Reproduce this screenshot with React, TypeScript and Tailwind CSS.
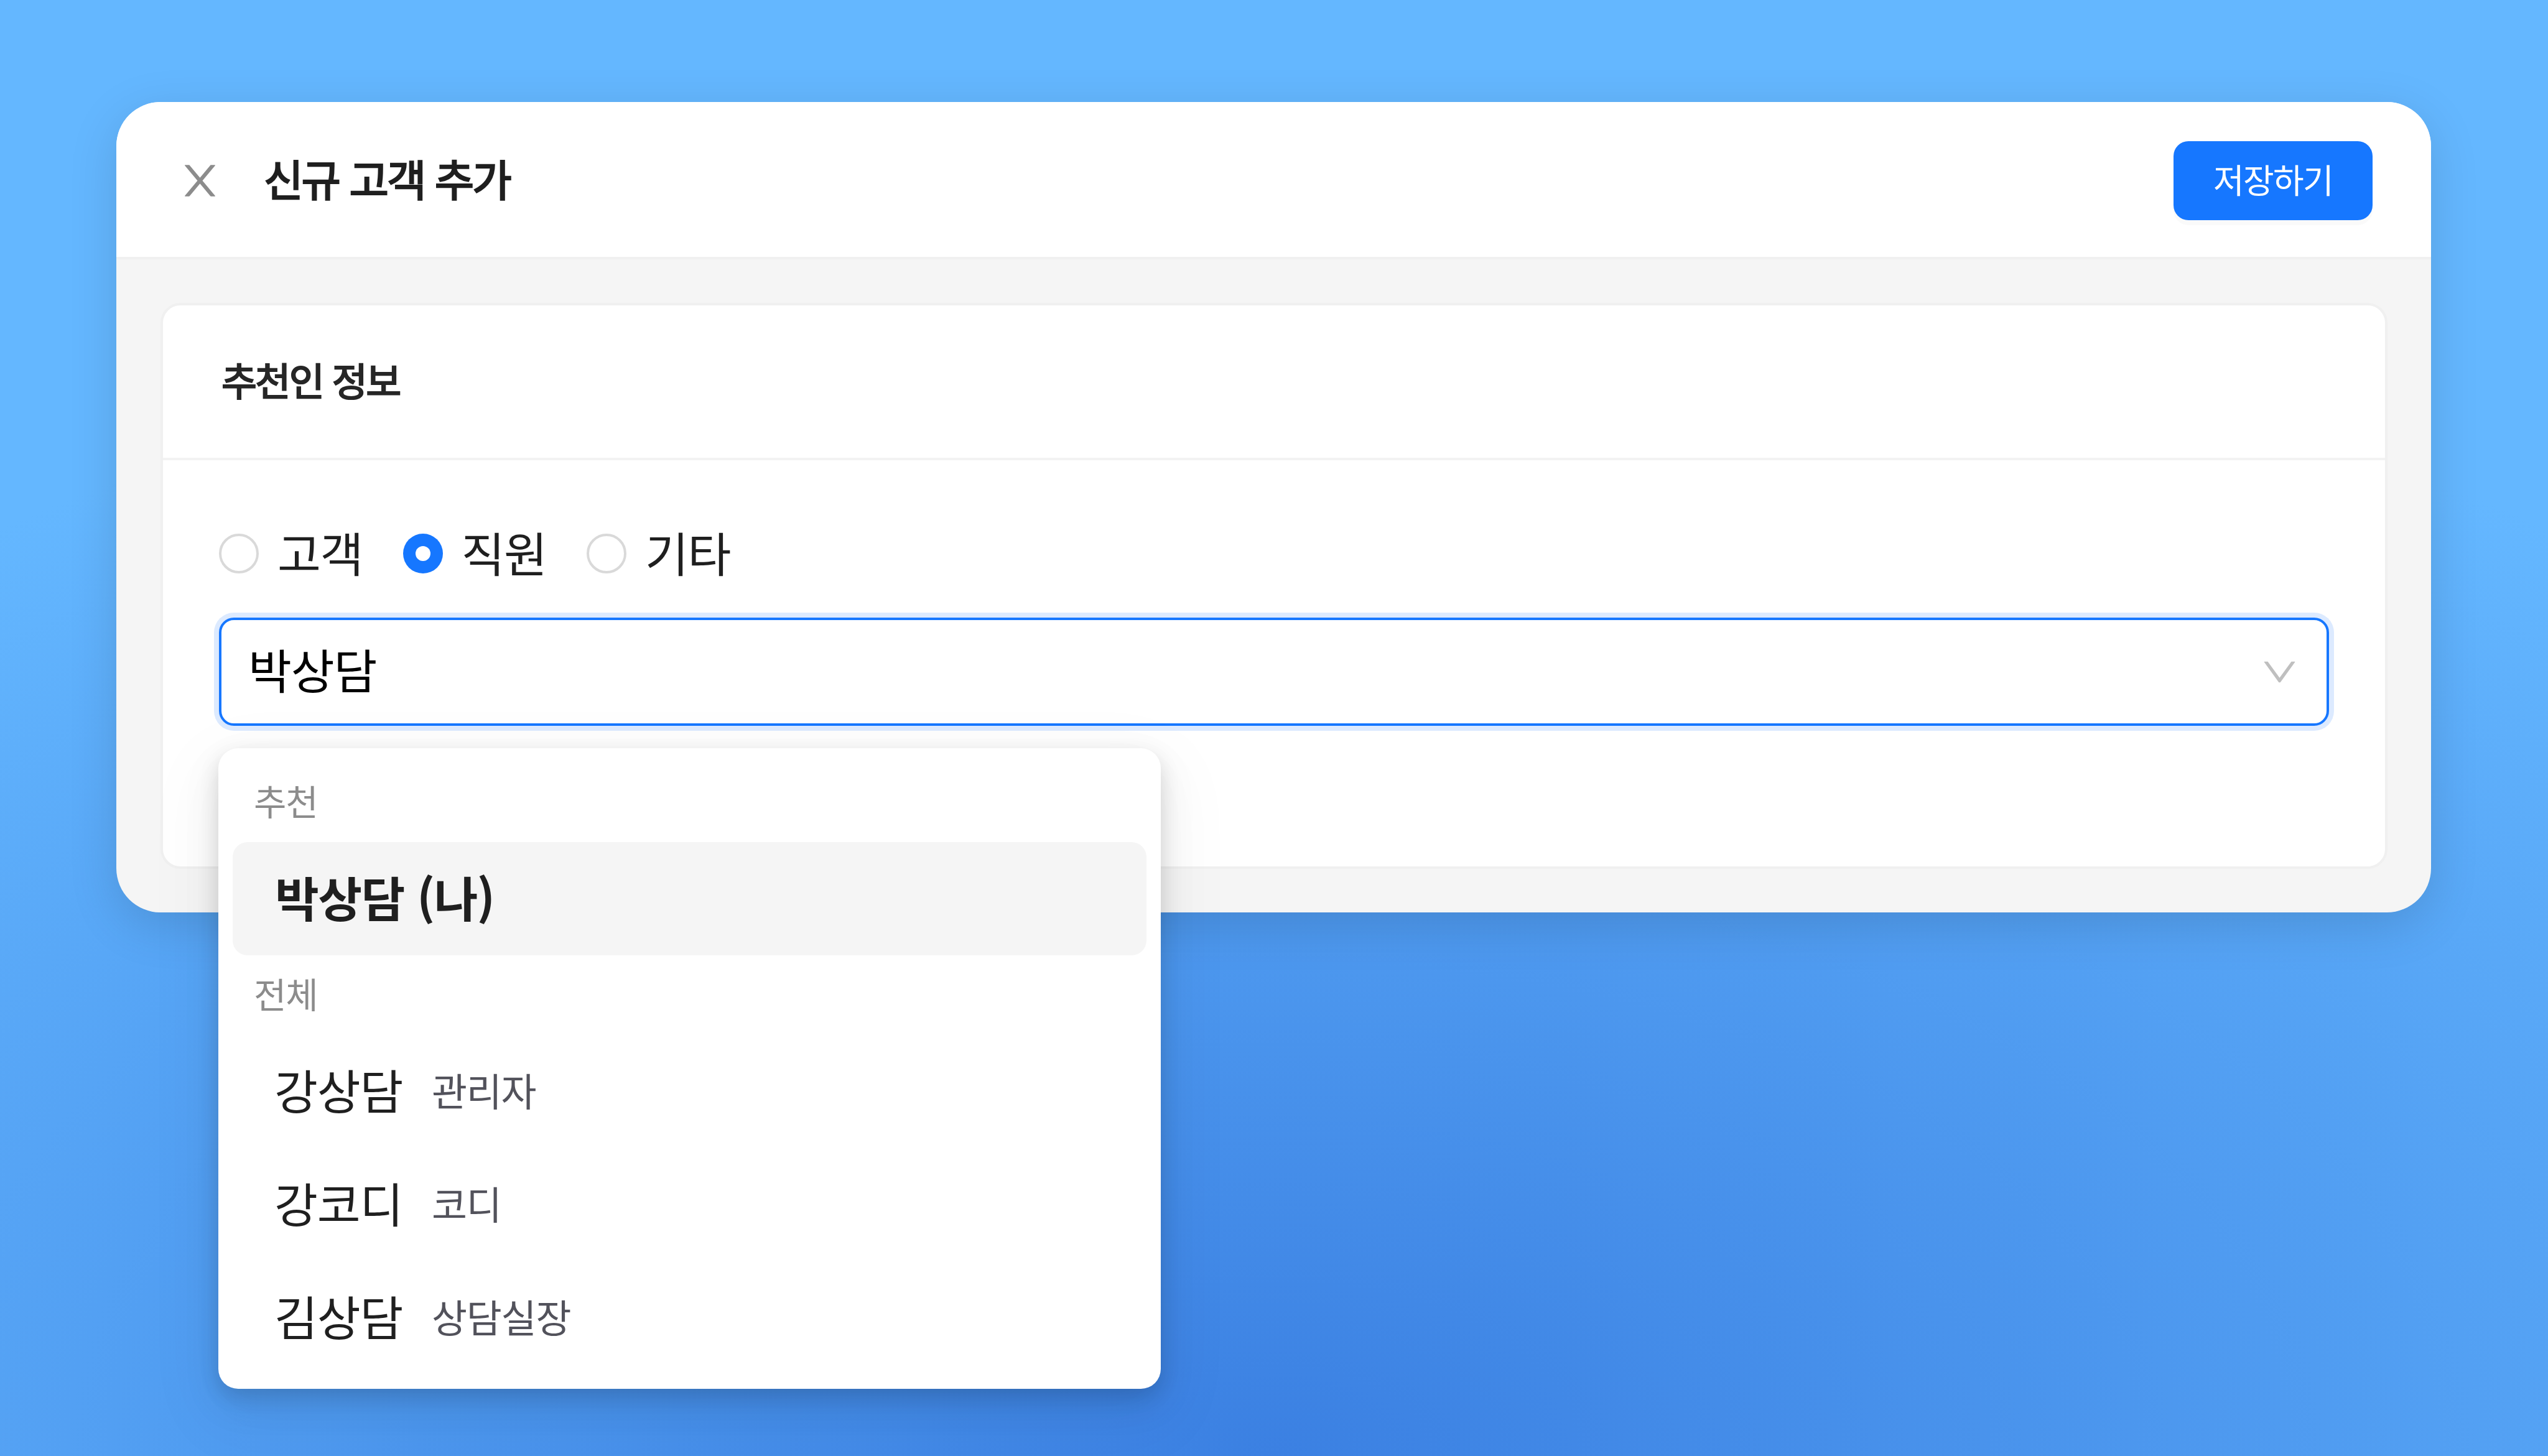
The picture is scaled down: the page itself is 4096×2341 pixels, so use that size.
import clsx from "clsx";

const radios = [
  { label: "고객", checked: false },
  { label: "직원", checked: true },
  { label: "기타", checked: false },
];

const staff = [
  { name: "강상담", role: "관리자" },
  { name: "강코디", role: "코디" },
  { name: "김상담", role: "상담실장" },
];

function CloseIcon({ className }: { className?: string }) {
  return (
    <svg viewBox="0 0 1024 1024" fill="currentColor" className={className}>
      <path d="M563.8 512l262.5-312.9c4.4-5.2.7-13.1-6.1-13.1h-79.8c-4.7 0-9.2 2.1-12.3 5.7L511.6 449.8 295.1 191.7c-3-3.6-7.5-5.7-12.3-5.7H203c-6.8 0-10.5 7.9-6.1 13.1L459.4 512 196.9 824.9A7.95 7.95 0 0 0 203 838h79.8c4.7 0 9.2-2.1 12.3-5.7l216.5-258.1 216.5 258.1c3 3.6 7.5 5.7 12.3 5.7h79.8c6.8 0 10.5-7.9 6.1-13.1L563.8 512z" />
    </svg>
  );
}

function DownIcon({ className }: { className?: string }) {
  return (
    <svg viewBox="0 0 1024 1024" fill="currentColor" className={className}>
      <path d="M884 256h-75c-5.1 0-9.9 2.5-12.9 6.6L512 654.2 227.9 262.6c-3-4.1-7.8-6.6-12.9-6.6h-75c-6.5 0-10.3 7.4-6.5 12.7l352.6 486.1c12.8 17.6 39 17.6 51.7 0l352.6-486.1c3.9-5.3.1-12.7-6.4-12.7z" />
    </svg>
  );
}

function Header() {
  return (
    <header className="flex h-[253px] items-center justify-between border-b-4 border-[#f0f0f0] bg-white pt-[4px] pr-[94px] pl-[95px]">
      <div className="flex items-center">
        <CloseIcon className="size-[79px] text-[#8c8c8c]" />
        <h1 className="ml-[63px] pb-[0.12em] text-[69px] leading-none tracking-[-0.043em] text-[#1f1f1f] [-webkit-text-stroke:2.4px_#1f1f1f]">
          신규 고객 추가
        </h1>
      </div>
      <button className="flex h-[127px] w-[320px] items-center justify-center rounded-[24px] bg-[#1677ff] pb-[0.08em] text-[54px] leading-none tracking-[-0.03em] text-white shadow-[0_8px_0_rgba(0,0,0,0.02)]">
        저장하기
      </button>
    </header>
  );
}

function Radio({ label, checked }: { label: string; checked: boolean }) {
  return (
    <label className="flex items-center">
      <span
        className={clsx(
          "flex size-[64px] items-center justify-center rounded-full",
          checked ? "bg-[#1677ff]" : "border-4 border-[#d9d9d9] bg-white",
        )}
      >
        {checked && <span className="size-[24px] rounded-full bg-white" />}
      </span>
      <span className="ml-[30px] w-[201.5px] pb-[0.08em] text-[76px] leading-none tracking-[-0.02em] text-[#1f1f1f]">
        {label}
      </span>
    </label>
  );
}

function GroupLabel({ children }: { children: string }) {
  return (
    <div className="flex h-[128px] items-center pb-[0.12em] pl-[34px] text-[57px] leading-none tracking-[-0.02em] text-[#8c8c8c]">
      {children}
    </div>
  );
}

function Dropdown() {
  return (
    <div className="absolute top-[206px] -left-[5px] z-10 w-[1515px] rounded-[32px] bg-white p-[23px] shadow-[0_24px_64px_0_rgba(0,0,0,0.08),0_12px_32px_0_rgba(0,0,0,0.12),0_36px_112px_32px_rgba(0,0,0,0.03)]">
      <GroupLabel>추천</GroupLabel>
      <div className="flex h-[182px] items-center rounded-[24px] bg-[#f5f5f5] pb-[0.08em] pl-[68px] text-[77px] leading-none font-bold tracking-[-0.02em] text-[#1f1f1f]">
        박상담 (나)
      </div>
      <GroupLabel>전체</GroupLabel>
      {staff.map(({ name, role }) => (
        <div key={name} className="flex h-[182px] items-center pl-[67px] leading-none">
          <span className="w-[253px] pb-[0.1em] text-[76px] tracking-[-0.015em] text-[#1f1f1f]">
            {name}
          </span>
          <span className="pb-[0.1em] text-[62px] tracking-[-0.02em] text-[#52525b]">{role}</span>
        </div>
      ))}
    </div>
  );
}

export default function App() {
  return (
    <main
      lang="ko"
      className="h-[2341px] w-[4096px] overflow-hidden bg-[radial-gradient(3317px_1896px_at_bottom,#3b80e2,#64b7ff)] pt-[164px] pl-[187px] font-['Noto_Sans_CJK_KR',sans-serif]"
    >
      <div className="h-[1303px] w-[3721px] rounded-[71px] bg-[#f5f5f5] shadow-[0_20px_80px_rgba(0,0,0,0.13)]">
        <div className="overflow-hidden rounded-t-[71px]">
          <Header />
        </div>
        <div className="pt-[70px] pr-[70px] pl-[71px]">
          <section className="h-[910px] rounded-[32px] border-4 border-[#f0f0f0] bg-white">
            <h2 className="flex h-[249px] items-center border-b-4 border-[#f2f2f2] pb-[0.12em] pl-[94px] text-[62px] leading-none tracking-[-0.043em] text-[#262626] [-webkit-text-stroke:2.2px_#262626]">
              추천인 정보
            </h2>
            <div className="px-[90px] pt-[104px]">
              <div className="flex h-[92px] items-center">
                {radios.map((radio) => (
                  <Radio key={radio.label} {...radio} />
                ))}
              </div>
              <div className="relative mt-[57px] flex h-[174px] items-center justify-between rounded-[24px] border-4 border-[#1677ff] bg-white pr-[42px] pl-[43px] shadow-[0_0_0_8px_#dceaff]">
                <span className="pb-[0.13em] text-[76px] leading-none tracking-[-0.015em] text-black">
                  박상담
                </span>
                <DownIcon className="size-[67px] text-[#bfbfbf]" />
                <Dropdown />
              </div>
            </div>
          </section>
        </div>
      </div>
    </main>
  );
}
